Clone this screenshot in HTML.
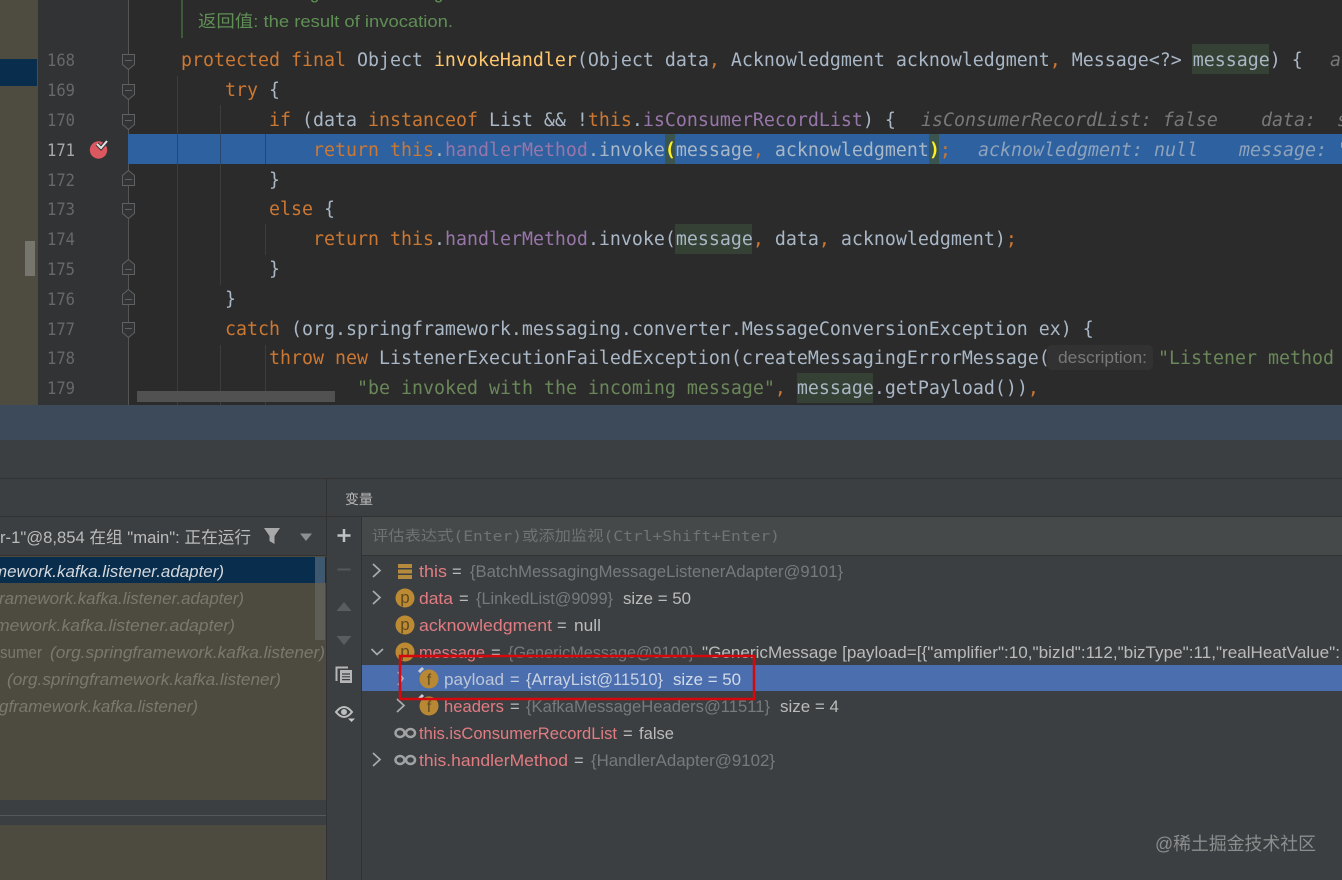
<!DOCTYPE html>
<html><head><meta charset="utf-8"><style>
html,body{margin:0;padding:0;background:#3c3f41;width:1342px;height:880px;overflow:hidden}
svg{display:block;filter:blur(0.35px)}
text{white-space:pre}
.m{font-family:"DejaVu Sans Mono","Liberation Mono",monospace;font-size:18.27px;fill:#a9b7c6}
.k{fill:#cc7832}.f{fill:#9876aa}.h{fill:#ffc66d}.s{fill:#6a8759}
.i{font-style:italic;fill:#787878}
.n{font-family:"DejaVu Sans Mono","Liberation Mono",monospace;font-size:16.5px;fill:#666869}
.u{font-family:"Liberation Sans","Noto Sans CJK SC",sans-serif;font-size:16.5px}
.r{fill:#e07c82}.g{fill:#777a7c}.w{fill:#bbbbbb}
.l{font-family:"Liberation Sans",sans-serif;font-size:16.5px;font-style:italic;fill:#7a796f}
</style></head><body>
<svg width="1342" height="880" viewBox="0 0 1342 880" xmlns="http://www.w3.org/2000/svg">
<!-- backgrounds -->
<rect x="0" y="0" width="38" height="405" fill="#4e4c40"/>
<rect x="0" y="59" width="37" height="27" fill="#082d4d"/>
<rect x="25" y="241" width="10" height="35" fill="#77766e"/>
<rect x="38" y="0" width="90" height="405" fill="#313335"/>
<rect x="128" y="0" width="1214" height="405" fill="#2b2b2b"/>
<rect x="0" y="405" width="1342" height="35" fill="#3c4a59"/>
<rect x="0" y="440" width="1342" height="440" fill="#3c3f41"/>
<!-- indent guides -->
<g stroke="#3d3d3d" stroke-width="1">
<path d="M177.500 76V405M220.500 105V285M220.500 345V405M265.500 224V255M265.500 345V405"/>
</g>
<!-- highlights -->
<rect x="128" y="134" width="1214" height="30" fill="#2d619f"/>
<path d="M177.500 134V164M220.500 134V164M265.500 134V164" stroke="#24466f" stroke-width="1"/>
<rect x="665" y="134" width="10" height="30" fill="#3a5550"/>
<rect x="929" y="134" width="10" height="30" fill="#3a5550"/>
<rect x="1192" y="44" width="77" height="30" fill="#344134"/>
<rect x="675" y="224" width="77" height="30" fill="#344134"/>
<rect x="797" y="373" width="76" height="30" fill="#344134"/>
<rect x="1047" y="345" width="106" height="25" rx="5" fill="#323232"/>
<rect x="181" y="0" width="2" height="38" fill="#3f5a3a"/>
<!-- gutter -->
<path d="M128.500 0V134M128.500 164V405" stroke="#555555" stroke-width="1"/>
<g fill="#313335" stroke="#5f6163" stroke-width="1">
<path d="M122.500 54.500H134.500V64.500L128.500 69.500L122.500 64.500Z"/>
<path d="M122.500 84.500H134.500V94.500L128.500 99.500L122.500 94.500Z"/>
<path d="M122.500 114.500H134.500V124.500L128.500 129.500L122.500 124.500Z"/>
<path d="M122.500 203.500H134.500V213.500L128.500 218.500L122.500 213.500Z"/>
<path d="M122.500 322.500H134.500V332.500L128.500 337.500L122.500 332.500Z"/>
<path d="M122.500 185.500H134.500V175.500L128.500 170.500L122.500 175.500Z"/>
<path d="M122.500 274.500H134.500V264.500L128.500 259.500L122.500 264.500Z"/>
<path d="M122.500 304.500H134.500V294.500L128.500 289.500L122.500 294.500Z"/>
</g>
<path d="M125 60.500H132M125 90.500H132M125 120.500H132M125 209.500H132M125 328.500H132M125 179.500H132M125 269.500H132M125 299.500H132" stroke="#5f6163" stroke-width="1"/>
<circle cx="98.500" cy="150" r="8.700" fill="#db5860"/>
<path d="M97 144L101 148L107 141" fill="none" stroke="#313335" stroke-width="4"/>
<path d="M97 144L101 148L107 141" fill="none" stroke="#e4e4e4" stroke-width="2"/>
<g class="n">
<text x="47" y="66" textLength="28" lengthAdjust="spacingAndGlyphs">168</text><text x="47" y="96" textLength="28" lengthAdjust="spacingAndGlyphs">169</text><text x="47" y="126" textLength="28" lengthAdjust="spacingAndGlyphs">170</text>
<text x="47" y="156" style="fill:#a9a9a9" textLength="28" lengthAdjust="spacingAndGlyphs">171</text>
<text x="47" y="186" textLength="28" lengthAdjust="spacingAndGlyphs">172</text><text x="47" y="215" textLength="28" lengthAdjust="spacingAndGlyphs">173</text><text x="47" y="245" textLength="28" lengthAdjust="spacingAndGlyphs">174</text><text x="47" y="275" textLength="28" lengthAdjust="spacingAndGlyphs">175</text><text x="47" y="305" textLength="28" lengthAdjust="spacingAndGlyphs">176</text><text x="47" y="335" textLength="28" lengthAdjust="spacingAndGlyphs">177</text><text x="47" y="364" textLength="28" lengthAdjust="spacingAndGlyphs">178</text><text x="47" y="394" textLength="28" lengthAdjust="spacingAndGlyphs">179</text>
</g>
<!-- code -->
<text class="u" x="310" y="-1" style="fill:#629755">g</text>
<text class="u" x="434" y="-1" style="fill:#629755">g</text>
<text class="u" x="198" y="27" style="fill:#5f8f55;font-size:17px" textLength="255" lengthAdjust="spacingAndGlyphs">返回值: the result of invocation.</text>
<text class="m" x="181" y="66"><tspan class="k">protected final </tspan>Object <tspan class="h">invokeHandler</tspan>(Object data<tspan class="k">,</tspan> Acknowledgment acknowledgment<tspan class="k">,</tspan> Message&lt;?&gt; message) {</text>
<text class="m i" x="1330" y="66">a</text>
<text class="m" x="225" y="96"><tspan class="k">try</tspan> {</text>
<text class="m" x="269" y="126"><tspan class="k">if</tspan> (data <tspan class="k">instanceof</tspan> List &amp;&amp; !<tspan class="k">this</tspan>.<tspan class="f">isConsumerRecordList</tspan>) {</text>
<text class="m i" x="921" y="126">isConsumerRecordList: false</text>
<text class="m i" x="1261" y="126">data:</text>
<text class="m i" x="1337" y="126">s</text>
<text class="m" x="313" y="156"><tspan class="k">return this</tspan>.<tspan class="f">handlerMethod</tspan>.invoke<tspan style="fill:#ffef28;font-weight:bold">(</tspan>message<tspan class="k">,</tspan> acknowledgment<tspan style="fill:#ffef28;font-weight:bold">)</tspan><tspan class="k">;</tspan></text>
<text class="m i" x="978" y="156" style="fill:#8ea2bb">acknowledgment: null</text>
<text class="m i" x="1239" y="156" style="fill:#8ea2bb">message: "</text>
<text class="m" x="269" y="186">}</text>
<text class="m" x="269" y="215"><tspan class="k">else</tspan> {</text>
<text class="m" x="313" y="245"><tspan class="k">return this</tspan>.<tspan class="f">handlerMethod</tspan>.invoke(message<tspan class="k">,</tspan> data<tspan class="k">,</tspan> acknowledgment)<tspan class="k">;</tspan></text>
<text class="m" x="269" y="275">}</text>
<text class="m" x="225" y="305">}</text>
<text class="m" x="225" y="335"><tspan class="k">catch</tspan> (org.springframework.messaging.converter.MessageConversionException ex) {</text>
<text class="m" x="269" y="364"><tspan class="k">throw new</tspan> ListenerExecutionFailedException(createMessagingErrorMessage(</text>
<text class="u" x="1058" y="363" style="fill:#787878" textLength="89" lengthAdjust="spacingAndGlyphs">description:</text>
<text class="m s" x="1158" y="364">"Listener method </text>
<text class="m" x="357" y="394"><tspan class="s">"be invoked with the incoming message"</tspan><tspan class="k">,</tspan> message.getPayload())<tspan class="k">,</tspan></text>
<rect x="137" y="391" width="198" height="11" fill="#515151"/>
<!-- panel lines -->
<path d="M0 478.500H1342M0 516.500H1342M326.500 479V880M361.500 517V880" stroke="#323232" stroke-width="1"/>
<rect x="362" y="517" width="980" height="38" fill="#45494a"/>
<path d="M0 555.500H326M362 555.500H1342" stroke="#323232" stroke-width="1"/>
<text class="u" x="345" y="504" style="fill:#bbbbbb;font-size:13.500px" textLength="28" lengthAdjust="spacingAndGlyphs">变量</text>
<text x="372" y="541" style="font-family:'DejaVu Sans Mono','Noto Sans CJK SC',monospace;font-size:14.500px;fill:#6f7375" textLength="408" lengthAdjust="spacingAndGlyphs">评估表达式(Enter)或添加监视(Ctrl+Shift+Enter)</text>
<!-- left frames -->
<text class="u" x="0" y="543" style="fill:#bbbbbb" textLength="251" lengthAdjust="spacingAndGlyphs">r-1"@8,854 在组 "main": 正在运行</text>
<path d="M264 528H280L274.500 536V544L269.500 541V536Z" fill="#a9a9a9"/>
<path d="M300 533.500H312L306 541Z" fill="#8d8f90"/>
<rect x="0" y="556" width="326" height="244" fill="#4d4b3f"/>
<rect x="0" y="557" width="326" height="26" fill="#082d4d"/>
<rect x="315" y="557" width="10" height="83" fill="#5f5e56"/>
<rect x="315" y="557" width="10" height="26" fill="#3e5870"/>
<rect x="0" y="825" width="326" height="55" fill="#4d4b3f"/>
<path d="M0 815.500H326" stroke="#555759" stroke-width="1"/>
<text class="l" x="-7" y="577" style="fill:#d4d8dc" textLength="231" lengthAdjust="spacingAndGlyphs">mework.kafka.listener.adapter)</text>
<text class="l" x="-1" y="604" textLength="245" lengthAdjust="spacingAndGlyphs">ramework.kafka.listener.adapter)</text>
<text class="l" x="-5" y="631" textLength="240" lengthAdjust="spacingAndGlyphs">mework.kafka.listener.adapter)</text>
<text class="u" x="0" y="658" style="fill:#7a796f" textLength="42" lengthAdjust="spacingAndGlyphs">sumer</text>
<text class="l" x="50" y="658" textLength="275" lengthAdjust="spacingAndGlyphs">(org.springframework.kafka.listener)</text>
<text class="l" x="7" y="685" textLength="274" lengthAdjust="spacingAndGlyphs">(org.springframework.kafka.listener)</text>
<text class="l" x="-1" y="712" textLength="199" lengthAdjust="spacingAndGlyphs">gframework.kafka.listener)</text>
<!-- side toolbar -->
<path d="M344 529V542M337.500 535.500H350.500" stroke="#c0c2c3" stroke-width="2.500"/>
<path d="M337.500 569.500H350.500" stroke="#55585a" stroke-width="2"/>
<path d="M336.500 611L344 602L351.500 611Z" fill="#5a5d5f"/>
<path d="M336.500 636H351.500L344 645Z" fill="#5a5d5f"/>
<path d="M336.500 681V667.500H348" fill="none" stroke="#b4b6b7" stroke-width="2"/>
<rect x="340" y="670" width="12" height="13" fill="#b4b6b7"/>
<path d="M342 674H350M342 676.800H350M342 679.600H350" stroke="#3c3f41" stroke-width="1.200"/>
<path d="M336 712Q344 702 352 712Q344 722 336 712Z" fill="none" stroke="#bbbdbe" stroke-width="2"/>
<circle cx="344" cy="712" r="3" fill="#bbbdbe"/>
<path d="M348 718.500H355L351.500 722Z" fill="#c5c7c8"/>
<!-- variables -->
<g fill="none" stroke="#a9abac" stroke-width="1.700">
<path d="M373 564L380 570.500L373 577"/>
<path d="M373 591L380 597.500L373 604"/>
<path d="M371.500 649L377 654.500L383 649"/>
<path d="M373 753L380 759.500L373 766"/>
</g>
<path d="M398 564H412V568H398ZM398 569.500H412V573.500H398ZM398 575H412V579H398Z" fill="#b58a3c"/>
<g fill="#bd8a34">
<circle cx="405" cy="598" r="9.500"/><circle cx="405" cy="625" r="9.500"/><circle cx="405" cy="652" r="9.500"/>
</g>
<g font-family="'Liberation Sans',sans-serif" font-size="17" fill="#5f4a20" text-anchor="middle">
<text x="405" y="603">p</text><text x="405" y="630">p</text><text x="405" y="657">p</text>
</g>
<rect x="362" y="665" width="980" height="26" fill="#4b6eaf"/>
<path d="M398 672L403 678.500L398 685" fill="none" stroke="#a9b6cc" stroke-width="1.700"/>
<path d="M397 699L404 705.500L397 712" fill="none" stroke="#a9abac" stroke-width="1.700"/>
<circle cx="429" cy="679" r="9.500" fill="#b98835"/><circle cx="429" cy="706" r="9.500" fill="#b98835"/>
<g font-family="'Liberation Sans',sans-serif" font-size="16" fill="#5f4a20" text-anchor="middle">
<text x="429" y="685">f</text><text x="429" y="712">f</text>
</g>
<path d="M419 672L423 668M419 699L423 695" stroke="#c8cdd6" stroke-width="3"/>
<g fill="none" stroke="#a0a2a3" stroke-width="2.500">
<ellipse cx="400" cy="733" rx="4.500" ry="4"/><ellipse cx="410.500" cy="733" rx="4.500" ry="4"/>
<ellipse cx="400" cy="760" rx="4.500" ry="4"/><ellipse cx="410.500" cy="760" rx="4.500" ry="4"/>
</g>
<g class="u">
<text class="r" x="419" y="577" textLength="28" lengthAdjust="spacingAndGlyphs">this</text><text class="w" x="452" y="577">=</text><text class="g" x="470" y="577" textLength="373" lengthAdjust="spacingAndGlyphs">{BatchMessagingMessageListenerAdapter@9101}</text>
<text class="r" x="419" y="604" textLength="34" lengthAdjust="spacingAndGlyphs">data</text><text class="w" x="459" y="604">=</text><text class="g" x="476" y="604" textLength="137" lengthAdjust="spacingAndGlyphs">{LinkedList@9099}</text><text class="w" x="623" y="604" textLength="68" lengthAdjust="spacingAndGlyphs">size = 50</text>
<text class="r" x="419" y="631" textLength="133" lengthAdjust="spacingAndGlyphs">acknowledgment</text><text class="w" x="557" y="631">=</text><text class="w" x="574" y="631" textLength="27" lengthAdjust="spacingAndGlyphs">null</text>
<text class="r" x="419" y="658" textLength="66" lengthAdjust="spacingAndGlyphs">message</text><text class="w" x="491" y="658">=</text><text class="g" x="508" y="658" textLength="186" lengthAdjust="spacingAndGlyphs">{GenericMessage@9100}</text><text class="w" x="702" y="658" textLength="638" lengthAdjust="spacingAndGlyphs">"GenericMessage [payload=[{"amplifier":10,"bizId":112,"bizType":11,"realHeatValue":</text>
<text x="444" y="685" textLength="60" lengthAdjust="spacingAndGlyphs" style="fill:#bcc6d8">payload</text><text x="510" y="685" style="fill:#c5cfe0">=</text><text x="526" y="685" textLength="137" lengthAdjust="spacingAndGlyphs" style="fill:#c9d2e2">{ArrayList@11510}</text><text x="673" y="685" textLength="68" lengthAdjust="spacingAndGlyphs" style="fill:#d3dbe8">size = 50</text>
<text class="r" x="444" y="712" textLength="60" lengthAdjust="spacingAndGlyphs">headers</text><text class="w" x="510" y="712">=</text><text class="g" x="526" y="712" textLength="244" lengthAdjust="spacingAndGlyphs">{KafkaMessageHeaders@11511}</text><text class="w" x="780" y="712" textLength="59" lengthAdjust="spacingAndGlyphs">size = 4</text>
<text class="r" x="419" y="739" textLength="198" lengthAdjust="spacingAndGlyphs">this.isConsumerRecordList</text><text class="w" x="623" y="739">=</text><text class="w" x="639" y="739" textLength="35" lengthAdjust="spacingAndGlyphs">false</text>
<text class="r" x="419" y="766" textLength="149" lengthAdjust="spacingAndGlyphs">this.handlerMethod</text><text class="w" x="574" y="766">=</text><text class="g" x="591" y="766" textLength="184" lengthAdjust="spacingAndGlyphs">{HandlerAdapter@9102}</text>
</g>
<!-- annotation -->
<rect x="400" y="656" width="354" height="43" fill="none" stroke="#d5080e" stroke-width="2.500"/>
<text x="1155" y="850" style="font-family:'Liberation Sans','Noto Sans CJK SC',sans-serif;font-size:18px;fill:#8b8d8e" textLength="161" lengthAdjust="spacingAndGlyphs">@稀土掘金技术社区</text>
</svg>
</body></html>
